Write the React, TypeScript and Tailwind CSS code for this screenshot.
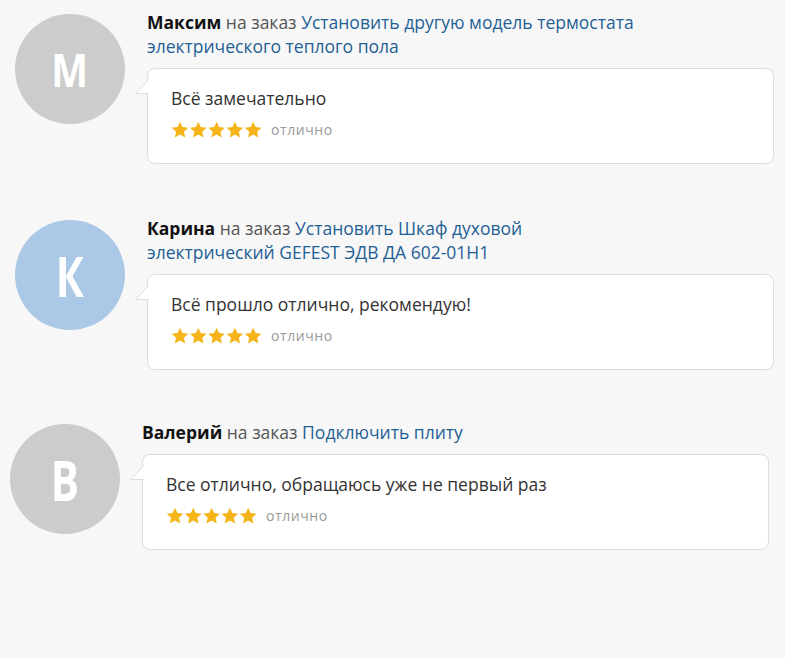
const reviews = [
  {
    name: "Максим",
    letter: "М",
    letterSize: "text-[46px] scale-x-[0.85]",
    avatar: "bg-[#cccccc]",
    order: "Установить другую модель термостата электрического теплого пола",
    text: "Всё замечательно",
    shift: "pl-[15px] pt-[10px]",
  },
  {
    name: "Карина",
    letter: "К",
    letterSize: "text-[56px] scale-x-[0.75]",
    avatar: "bg-[#abc8e6]",
    order: "Установить Шкаф духовой электрический GEFEST ЭДВ ДА 602-01Н1",
    text: "Всё прошло отлично, рекомендую!",
    shift: "pl-[15px] pt-[52px]",
  },
  {
    name: "Валерий",
    letter: "В",
    letterSize: "text-[56px] scale-x-[0.75]",
    avatar: "bg-[#cccccc]",
    order: "Подключить плиту",
    text: "Все отлично, обращаюсь уже не первый раз",
    shift: "pl-[10px] pt-[50px]",
  },
];

function Stars() {
  const star = "M9 0.8l2.45 5.3 5.8 0.65-4.3 3.95 1.2 5.7L9 13.5l-5.15 2.9 1.2-5.7L0.75 6.75l5.8-0.65z";
  return (
    <svg width="92" height="17" viewBox="0 0 92 17">
      {[0, 1, 2, 3, 4].map((i) => (
        <path key={i} d={star} transform={`translate(${i * 18.3} 0)`} fill="#f4b41a" />
      ))}
    </svg>
  );
}

function Review({ r }: { r: (typeof reviews)[number] }) {
  return (
    <div className={`flex ${r.shift}`}>
      <div className={`w-[110px] h-[110px] shrink-0 rounded-full ${r.avatar} mt-[4px] flex items-center justify-center`}>
        <span className={`text-white font-bold leading-none ${r.letterSize}`}>{r.letter}</span>
      </div>
      <div className="ml-[22px] w-[627px]">
        <div className="w-[497px] text-[17.5px] leading-[24px] text-[#555]">
          <span className="font-bold text-[#111]">{r.name}</span> на заказ{" "}
          <a href="#" className="text-[#1f5f95]">{r.order}</a>
        </div>
        <div className="relative mt-[10px] bg-white border border-[#dddddd] rounded-[8px] pl-[23px] pt-[17px] pb-[25px]">
          <svg className="absolute left-[-13px] top-[10px]" width="14" height="18" viewBox="0 0 14 18">
            <path d="M14 0.5 L1 14.5 L14 14.5 Z" fill="white" />
            <path d="M13.5 0.5 L1 14.5 L13.5 14.5" fill="none" stroke="#dddddd" strokeWidth="1" />
          </svg>
          <div className="text-[17.5px] leading-[24px] text-[#333]">{r.text}</div>
          <div className="flex items-center mt-[11px] gap-[8px]">
            <Stars />
            <span className="text-[14px] leading-[17px] tracking-[0.04em] text-[#999]">отлично</span>
          </div>
        </div>
      </div>
    </div>
  );
}

export default function App() {
  return (
    <div
      className="w-[785px] h-[658px] bg-[#f7f7f7] overflow-hidden"
      style={{ fontFamily: '"Open Sans", "Liberation Sans", sans-serif' }}
    >
      {reviews.map((r) => (
        <Review key={r.name} r={r} />
      ))}
    </div>
  );
}
